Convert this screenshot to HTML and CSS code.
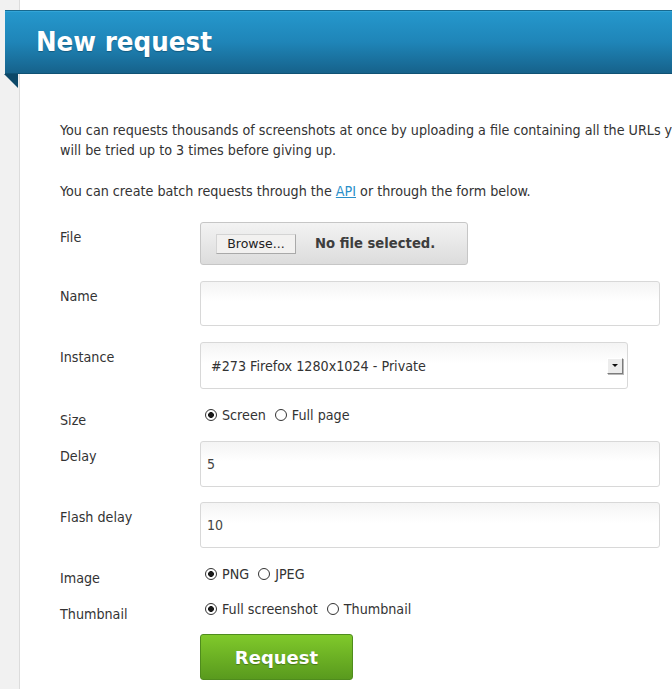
FILE: index.html
```html
<!DOCTYPE html>
<html lang="en">
<head>
<meta charset="utf-8">
<title>New request</title>
<link rel="stylesheet" href="styles.css">
</head>
<body>
<div class="page">
  <aside class="rail"></aside>
  <main class="main">
    <header class="banner">
      <h1 class="banner-title">New request</h1>
    </header>
    <div class="content">
      <p class="intro">You can requests thousands of screenshots at once by uploading a file containing all the URLs you want to capture. Each URL<br>will be tried up to 3 times before giving up.</p>
      <p class="intro">You can create batch requests through the <a class="link" href="#">API</a> or through the form below.</p>
      <form class="form">
        <div class="row row-file">
          <span class="lbl">File</span>
          <div class="filebox"><span class="browse">Browse...</span><span class="nofile">No file selected.</span></div>
        </div>
        <div class="row row-name">
          <span class="lbl">Name</span>
          <input class="textbox tb-name" type="text" value="">
        </div>
        <div class="row row-instance">
          <span class="lbl">Instance</span>
          <div class="select"><span class="select-text">#273 Firefox 1280x1024 - Private</span><span class="select-arrow"></span></div>
        </div>
        <div class="row row-radio row-size">
          <span class="lbl">Size</span>
          <div class="radios">
            <span class="opt"><span class="radio checked"></span>Screen</span>
            <span class="opt"><span class="radio"></span>Full page</span>
          </div>
        </div>
        <div class="row row-delay">
          <span class="lbl">Delay</span>
          <input class="textbox tb-delay" type="text" value="5">
        </div>
        <div class="row row-flash">
          <span class="lbl">Flash delay</span>
          <input class="textbox tb-flash" type="text" value="10">
        </div>
        <div class="row row-radio row-image">
          <span class="lbl">Image</span>
          <div class="radios radios-low">
            <span class="opt"><span class="radio checked"></span>PNG</span>
            <span class="opt"><span class="radio"></span>JPEG</span>
          </div>
        </div>
        <div class="row row-radio row-thumb">
          <span class="lbl">Thumbnail</span>
          <div class="radios">
            <span class="opt"><span class="radio checked"></span>Full screenshot</span>
            <span class="opt"><span class="radio"></span>Thumbnail</span>
          </div>
        </div>
        <div class="actions">
          <button class="submit" type="button">Request</button>
        </div>
      </form>
    </div>
  </main>
</div>
</body>
</html>
```

FILE: styles.css
```css
html, body {
  margin: 0;
  padding: 0;
  overflow: hidden;
  background: #ffffff;
}

body {
  font-family: "DejaVu Sans Condensed", "DejaVu Sans", sans-serif;
  font-stretch: condensed;
  font-size: 14.2px;
  line-height: 20px;
  color: #333333;
}

.page {
  display: flex;
  min-height: 689px;
}

.rail {
  flex: none;
  width: 19px;
  background: #f1f1f1;
  border-right: 1px solid #dcdcdc;
}

.main {
  flex: 1;
  min-width: 0;
}

.banner {
  position: relative;
  margin: 10px 0 0 -15px;
  height: 62px;
  border-top: 1px solid #17698f;
  border-bottom: 1px solid #0f5274;
  background: linear-gradient(#2598cd, #1f85b8 50%, #16628b);
  box-shadow: inset 0 1px 0 #33a5d8;
}

.banner::after {
  content: "";
  position: absolute;
  left: -1px;
  top: 100%;
  width: 0;
  height: 0;
  border-top: 14px solid #0c4868;
  border-left: 14px solid transparent;
  margin-top: 1px;
}

.banner-title {
  margin: 0;
  padding-left: 31px;
  font-family: "DejaVu Sans Condensed", "DejaVu Sans", sans-serif;
  font-stretch: condensed;
  font-weight: bold;
  font-size: 27.4px;
  line-height: 62px;
  color: #ffffff;
  text-shadow: 0 1px 1px rgba(0, 0, 0, 0.25);
}

.content {
  padding: 46px 0 0 40px;
}

.intro {
  margin: 0 0 21px;
  white-space: nowrap;
}

.link {
  color: #2a8fc9;
  text-decoration: underline;
}

.form {
  margin: 0;
}

.row {
  display: flex;
  align-items: flex-start;
  margin-bottom: 16px;
}

.lbl {
  flex: none;
  width: 140px;
  padding-top: 5px;
  line-height: 20px;
}

.row-radio { margin-bottom: 11px; }
.row-delay, .row-flash { margin-bottom: 15px; }
.row-thumb { margin-bottom: 10px; }

.filebox {
  box-sizing: border-box;
  width: 268px;
  height: 43px;
  display: flex;
  align-items: center;
  padding-left: 15px;
  border: 1px solid #c6c6c6;
  border-radius: 3px;
  background: linear-gradient(#f3f3f3, #dcdcdc);
}

.browse {
  box-sizing: border-box;
  width: 80px;
  height: 20px;
  display: flex;
  align-items: center;
  justify-content: center;
  font-family: "DejaVu Sans", sans-serif;
  font-stretch: normal;
  font-size: 12.5px;
  color: #222222;
  background: #f2f1f0;
  border: 1px solid #a9a9a9;
  border-top-color: #d4d4d4;
  border-left-color: #d4d4d4;
}

.nofile {
  margin-left: 19px;
  font-family: "DejaVu Sans", sans-serif;
  font-stretch: normal;
  font-weight: bold;
  font-size: 13.2px;
  color: #3d3d3d;
}

.textbox {
  box-sizing: border-box;
  width: 460px;
  margin: 0;
  padding: 0 6px;
  border: 1px solid #d8d8d8;
  border-radius: 3px;
  background: linear-gradient(#f4f4f4, #ffffff 45%);
  font-family: "DejaVu Sans Condensed", "DejaVu Sans", sans-serif;
  font-stretch: condensed;
  font-size: 14px;
  color: #444444;
  outline: none;
}

.tb-name { height: 45px; }
.tb-delay, .tb-flash { height: 46px; }

.select {
  box-sizing: border-box;
  width: 428px;
  height: 47px;
  display: flex;
  align-items: center;
  justify-content: space-between;
  padding: 0 4px 0 10px;
  border: 1px solid #d8d8d8;
  border-radius: 3px;
  background: linear-gradient(#f4f4f4, #ffffff 45%);
  color: #333333;
}

.select-arrow {
  box-sizing: border-box;
  width: 16px;
  height: 16px;
  display: flex;
  align-items: center;
  justify-content: center;
  background: #ececec;
  border: 1px solid #ffffff;
  border-right-color: #7c7c7c;
  border-bottom-color: #7c7c7c;
  box-shadow: 1px 1px 0 #b8b8b8;
}

.select-arrow::before {
  content: "";
  width: 0;
  height: 0;
  border-top: 3px solid #111111;
  border-left: 3px solid transparent;
  border-right: 3px solid transparent;
}

.radios {
  display: flex;
  align-items: center;
  height: 20px;
  padding-left: 5px;
}

.radios-low {
  padding-top: 1px;
}

.opt {
  display: inline-flex;
  align-items: center;
  margin-right: 9px;
  white-space: nowrap;
}

.radio {
  box-sizing: border-box;
  width: 12px;
  height: 12px;
  margin-right: 5px;
  border: 1px solid #333333;
  border-radius: 50%;
  background: #ffffff;
}

.radio.checked {
  background: radial-gradient(circle, #1a1a1a 0, #1a1a1a 2.6px, #ffffff 3.2px);
}

.actions {
  padding-left: 140px;
}

.submit {
  box-sizing: border-box;
  width: 153px;
  height: 46px;
  margin: 0;
  padding: 0;
  border: 1px solid #4f8c1d;
  border-radius: 3px;
  background: linear-gradient(#80c92b, #6cb124 50%, #599a1e);
  color: #ffffff;
  font-family: "DejaVu Sans", sans-serif;
  font-weight: bold;
  font-size: 18px;
  text-shadow: 0 1px 1px rgba(0, 0, 0, 0.3);
  cursor: pointer;
}
```
